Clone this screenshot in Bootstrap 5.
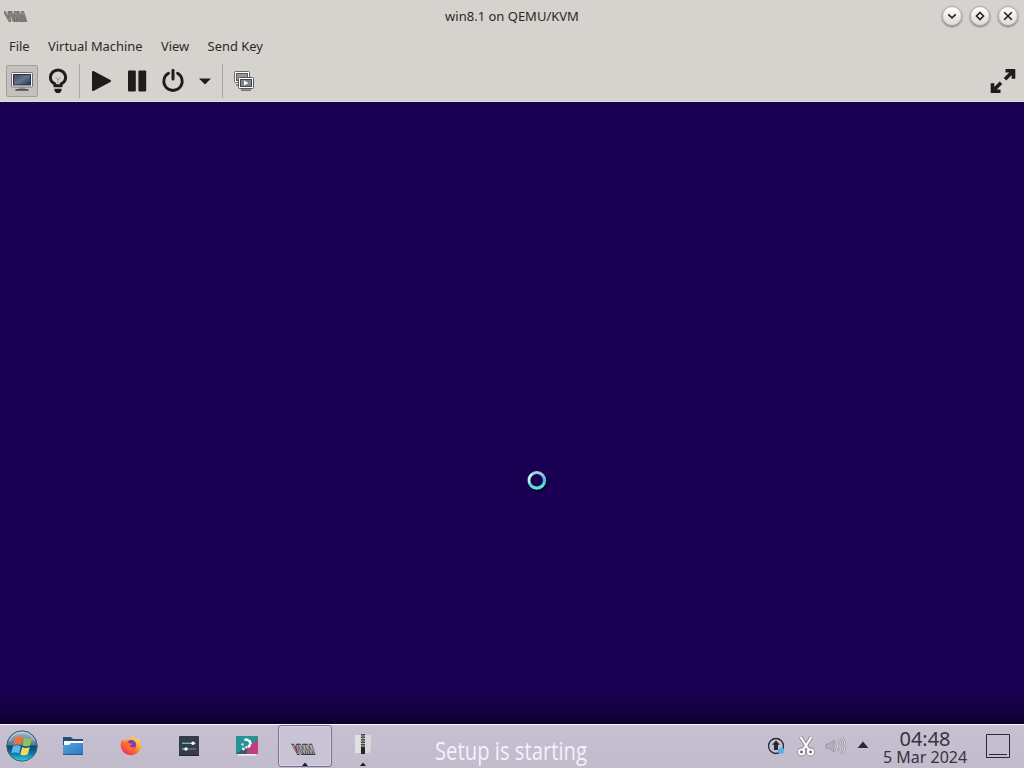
<!DOCTYPE html>
<html lang="en">
<head>
  <meta charset="UTF-8" />
  <meta name="viewport" content="width=device-width, initial-scale=1.0" />
  <title>win8.1 on QEMU/KVM</title>
  <link href="https://cdn.jsdelivr.net/npm/bootstrap@5.3.0/dist/css/bootstrap.min.css" rel="stylesheet">
  <style>
    body {
      font-family: "Noto Sans", "Open Sans", sans-serif;
      font-size: 13px;
      line-height: 18px;
      color: #2b2a29;
      background: #1a0052;
    }

    svg {
      display: block;
      flex: none;
    }

    /* Window chrome */
    .window-head {
      height: 102px;
      background: #d6d2ce;
      border-bottom: 1px solid #dedbe0;
    }

    .titlebar {
      height: 32px;
      padding: 0 6px 0 4px;
    }

    .title-side {
      width: 76px;
    }

    .win-title {
      padding-left: 2px;
    }

    .win-btn {
      width: 20px;
      height: 20px;
      padding: 0;
      border: 1px solid #aaa7a4;
      border-radius: 50%;
      background: linear-gradient(#fff, #dedbd8);
      box-shadow: 0 1px 2px rgba(0, 0, 0, .5);
    }

    .menubar {
      height: 29px;
      padding: 0 0 2px 9px;
      gap: 18.4px;
    }

    .menubar .nav-link {
      padding: 0;
      color: #2b2a29;
      font-size: 12.9px;
    }

    .toolbar {
      height: 40px;
      padding: 0 6px;
    }

    .tool {
      width: 32px;
      height: 32px;
      padding: 0;
      border: 1px solid transparent;
      border-radius: 2px;
    }

    .tool.pressed {
      background: #c3c0bd;
      border-color: #a19e9b;
    }

    .tool-sep {
      width: 1px;
      height: 34px;
      margin: 0 1px;
      background: #aaa7a4;
    }

    .tool-sep.wide {
      margin-left: 5px;
    }

    /* Guest display */
    .guest {
      background: linear-gradient(#190052 0, #190052 590px, #140042 608px, #0d0029 622px);
    }

    .spinner-spot {
      margin: 367px 0 0 525px;
    }

    /* Panel */
    .panel {
      height: 44px;
      padding-bottom: 1px;
      background: linear-gradient(#c6c0d2, #c1bbcc);
      border-top: 1px solid #fbf9ff;
    }

    .start {
      width: 44px;
    }

    .task {
      width: 54px;
      height: 42px;
      margin: 0 2px;
      padding: 0;
      border: 1px solid transparent;
      border-radius: 3px;
    }

    .task.current {
      background: #c9c4d5;
      border-color: #74708f;
      box-shadow: inset 0 0 0 1px #d8d4e3;
    }

    .guest-status {
      margin: 9px 0 0 39px;
    }

    .clock {
      width: 88px;
      margin-left: 12px;
      color: #35333f;
    }

    .clock-time {
      padding-top: 3px;
      font-size: 20px;
      line-height: 18px;
    }

    .clock-date {
      font-size: 16px;
      line-height: 18px;
    }

    .show-desktop {
      margin: 0 13px 0 16px;
    }
  </style>
</head>
<body class="vh-100 overflow-hidden d-flex flex-column">

  <header class="window-head flex-shrink-0">
    <!-- Title bar -->
    <div class="titlebar d-flex align-items-center justify-content-between">
      <div class="title-side">
        <svg width="34" height="20" viewBox="0 0 34 20">
          <text transform="translate(-2 0) skewX(18)" x="0" y="15" textLength="20" lengthAdjust="spacingAndGlyphs" font-family="Liberation Sans, sans-serif" font-weight="700" font-size="13" fill="#948d8a" stroke="#5c5655" stroke-width="1.6" paint-order="stroke">VMM</text>
        </svg>
      </div>
      <div class="win-title">win8.1 on QEMU/KVM</div>
      <div class="title-side d-flex gap-2 justify-content-end">
        <button class="win-btn d-flex align-items-center justify-content-center" aria-label="Minimize">
          <svg width="12" height="12" viewBox="0 0 12 12"><path d="M2.3 4.3 6 7.8l3.7-3.5" fill="none" stroke="#222" stroke-width="1.6"/></svg>
        </button>
        <button class="win-btn d-flex align-items-center justify-content-center" aria-label="Maximize">
          <svg width="12" height="12" viewBox="0 0 12 12"><path d="M6 2.5 9.5 6 6 9.5 2.5 6z" fill="none" stroke="#222" stroke-width="1.6"/></svg>
        </button>
        <button class="win-btn d-flex align-items-center justify-content-center" aria-label="Close">
          <svg width="12" height="12" viewBox="0 0 12 12"><path d="m2.2 2.2 7.6 7.6m0-7.6L2.2 9.8" stroke="#222" stroke-width="1.6"/></svg>
        </button>
      </div>
    </div>

    <!-- Menu bar -->
    <nav class="menubar nav align-items-center flex-nowrap">
      <a class="nav-link" href="#">File</a>
      <a class="nav-link" href="#">Virtual Machine</a>
      <a class="nav-link" href="#">View</a>
      <a class="nav-link" href="#">Send Key</a>
    </nav>

    <!-- Toolbar -->
    <div class="toolbar d-flex align-items-center">
      <button class="tool pressed btn d-flex align-items-center justify-content-center" aria-label="Console">
        <svg width="24" height="24" viewBox="0 0 24 24">
          <defs><linearGradient id="lcd" x1="0" y1="0" x2="1" y2="1"><stop offset="0" stop-color="#3d4a69"/><stop offset=".5" stop-color="#66738f"/><stop offset="1" stop-color="#26324e"/></linearGradient></defs>
          <rect x="1.5" y="3.5" width="21" height="14.5" rx="1" fill="#f6f6f4" stroke="#73726f"/>
          <rect x="3.5" y="5.5" width="17" height="10.5" fill="url(#lcd)" stroke="#2b3142"/>
          <path d="M9 18h6v2H9z" fill="#8c8b87"/><path d="M5.5 20h13v1.8h-13z" fill="#555350"/>
        </svg>
      </button>
      <button class="tool btn d-flex align-items-center justify-content-center ms-1" aria-label="Details">
        <svg width="24" height="26" viewBox="0 0 24 26">
          <path d="M8.8 17.7v-1.9C6 14.5 4.4 12.4 4.4 9.5a7.6 7.6 0 0 1 15.2 0c0 2.9-1.6 5-4.4 6.3v1.9z" fill="none" stroke="#1f1d1c" stroke-width="3" stroke-linejoin="round"/>
          <path d="m9.7 9 2.3 3 2.3-3M12 12v3" fill="none" stroke="#99938f"/>
          <path d="M8.5 20.8h7v2L13.8 25h-3.6l-1.7-2.2z" fill="#1f1d1c"/>
        </svg>
      </button>
      <div class="tool-sep wide"></div>
      <button class="tool btn d-flex align-items-center justify-content-center ms-1" aria-label="Run">
        <svg width="24" height="24" viewBox="0 0 24 24"><path d="M4 3 21 12 4 21z" fill="#1f1d1c" stroke="#1f1d1c" stroke-width="2" stroke-linejoin="round"/></svg>
      </button>
      <button class="tool btn d-flex align-items-center justify-content-center ms-1" aria-label="Pause">
        <svg width="24" height="24" viewBox="0 0 24 24"><rect x="3" y="1.5" width="7.8" height="21" rx="1" fill="#1f1d1c"/><rect x="13.4" y="1.5" width="7.8" height="21" rx="1" fill="#1f1d1c"/></svg>
      </button>
      <button class="tool btn d-flex align-items-center justify-content-center ms-1" aria-label="Shut down">
        <svg width="24" height="24" viewBox="0 0 24 24"><path d="M7.5 4.3a9.2 9.2 0 1 0 9 0" fill="none" stroke="#1f1d1c" stroke-width="2.8" stroke-linecap="round"/><path d="M12 1.4V10" stroke="#1f1d1c" stroke-width="3" stroke-linecap="round"/></svg>
      </button>
      <button class="tool btn d-flex align-items-center justify-content-center" aria-label="Shut down options">
        <svg width="12" height="7" viewBox="0 0 12 7"><path d="M0 .5h12l-6 6z" fill="#1f1d1c"/></svg>
      </button>
      <div class="tool-sep"></div>
      <button class="tool btn d-flex align-items-center justify-content-center ms-1" aria-label="Snapshots">
        <svg width="24" height="24" viewBox="0 0 24 24">
          <rect x="2.5" y="2.5" width="15" height="11" rx="1" fill="#fff" stroke="#6a6865"/><rect x="4.5" y="4.5" width="11" height="7" fill="#92989c" stroke="#54585d"/>
          <path d="M4 16h4" stroke="#77736f" stroke-width="1.4"/>
          <rect x="6.5" y="8.5" width="15" height="11" rx="1" fill="#fff" stroke="#5b5956"/><rect x="8.5" y="10.5" width="11" height="7" fill="#7c858c" stroke="#45494e"/>
          <path d="m12 11.5 4.5 2.5-4.5 2.5z" fill="#fff"/><path d="M9 21.2h10" stroke="#73706d" stroke-width="1.6"/>
        </svg>
      </button>
      <button class="btn p-0 border-0 ms-auto" aria-label="Fullscreen">
        <svg width="30" height="28" viewBox="0 0 30 28">
          <g fill="none" stroke="#1f1d1c" stroke-width="3.6">
            <path d="M17.5 3.8h8v8M25 4.300l-8 8"/>
            <path d="M12.500 24.200h-8v-8M5 23.700l8-8"/>
          </g>
        </svg>
      </button>
    </div>
  </header>

  <!-- Guest display with busy ring -->
  <main class="guest flex-grow-1 overflow-hidden">
    <div class="spinner-spot">
      <svg width="24" height="24" viewBox="0 0 24 24">
        <defs><linearGradient id="ring" x1="0" y1="0" x2=".2" y2="1"><stop offset="0" stop-color="#a8d6e0"/><stop offset=".4" stop-color="#8db5dc"/><stop offset=".65" stop-color="#43bfc6"/><stop offset="1" stop-color="#5fe6cf"/></linearGradient></defs>
        <circle cx="13" cy="12.5" r="8.5" fill="none" stroke="#0c0038" stroke-width="3"/>
        <circle cx="11.8" cy="11.3" r="7.8" fill="none" stroke="url(#ring)" stroke-width="3.2"/>
        <path d="M4.7 14.5A8 8 0 0 1 7 5" fill="none" stroke="#d9fff8" stroke-width="1.5"/>
      </svg>
    </div>
  </main>

  <!-- Panel -->
  <footer class="panel flex-shrink-0 d-flex align-items-center">
    <div class="start d-flex justify-content-center">
      <svg width="34" height="34" viewBox="0 0 34 34">
        <defs>
          <linearGradient id="orb" x1="0" y1="0" x2="0" y2="1"><stop offset="0" stop-color="#a9bccb"/><stop offset=".46" stop-color="#547b96"/><stop offset=".5" stop-color="#064b73"/><stop offset=".75" stop-color="#0879a4"/><stop offset="1" stop-color="#39d5e8"/></linearGradient>
        </defs>
        <circle cx="17" cy="17" r="15.2" fill="url(#orb)" stroke="#3c5a70" stroke-width="1"/>
        <path d="M4.5 12A13.5 13.5 0 0 1 29.5 12" fill="none" stroke="#dce7ee" stroke-opacity=".7"/>
        <path d="M10.2 8.5Q14 6.2 18 8.3L16.2 15.8Q12 13.8 8.4 16z" fill="#ec7140"/>
        <path d="M19.3 8.8Q23 11 27 8.8L25.1 16.5Q21.4 18.6 17.5 16.5z" fill="#8fc356"/>
        <path d="M8 17.3Q12 15.2 15.9 17.2L14 24.5Q10 22.4 6.2 24.6z" fill="#62b5e3"/>
        <path d="M17.2 18Q21 20 24.8 17.9L22.9 25.3Q19.2 27.4 15.3 25.4z" fill="#f5d95a"/>
      </svg>
    </div>
    <button class="task btn d-flex align-items-center justify-content-center" aria-label="Files">
      <svg width="24" height="24" viewBox="0 0 24 24">
        <defs><linearGradient id="folder" x1="0" y1="0" x2="1" y2="1"><stop offset="0" stop-color="#50a5df"/><stop offset="1" stop-color="#2f76bb"/></linearGradient></defs>
        <path d="M2 3h8l2 2h10v8H2z" fill="#284e78"/><path d="M3 7h19v7H3z" fill="#f5fbff"/>
        <path d="M2 11h6l2-2h12v12H2z" fill="url(#folder)"/><path d="M2 20.5h20" stroke="#285a8d"/>
      </svg>
    </button>
    <button class="task btn d-flex align-items-center justify-content-center" aria-label="Firefox">
      <svg width="24" height="24" viewBox="0 0 24 24">
        <defs><linearGradient id="fox" x1=".9" y1="0" x2=".2" y2="1"><stop offset="0" stop-color="#fff34f"/><stop offset=".35" stop-color="#ffb52e"/><stop offset=".65" stop-color="#ff6533"/><stop offset="1" stop-color="#ec2562"/></linearGradient></defs>
        <path d="M3.5 5.2 5.5 7Q7 5.2 9 5l2-1q1 .5 1.5 1l2-3.5q1 3 3.2 4.2l1-1.2q3.3 3.5 3.3 8A10.2 10.2 0 1 1 3.5 5.2z" fill="url(#fox)"/>
        <circle cx="12.3" cy="11" r="4.9" fill="#7c3bbc"/>
        <path d="M4.5 9q3-2.2 6 .3l3 .4q-1 1.6-3 2 1.3 2.7 5.7.7-1 3.8-4.7 3.8Q6 15.5 4.500 9" fill="#ff6b35"/>
      </svg>
    </button>
    <button class="task btn d-flex align-items-center justify-content-center" aria-label="Settings">
      <svg width="22" height="22" viewBox="0 0 22 22">
        <rect x="1" y="1" width="20" height="20" rx="1" fill="#353b48"/><path d="M1 20.5h20" stroke="#20242d"/>
        <path d="M4 8.3h14M4 14h14" stroke="#7f8c96"/><path d="M4 8.3h10M4 14h3" stroke="#63c7df"/><circle cx="15" cy="8.3" r="1.7" fill="#fff"/><circle cx="8" cy="14" r="1.7" fill="#fff"/>
      </svg>
    </button>
    <button class="task btn d-flex align-items-center justify-content-center" aria-label="Help">
      <svg width="24" height="24" viewBox="0 0 24 24">
        <path d="M1 2h22v18H1z" fill="#269496"/><path d="M23 5v15H7l5-6z" fill="#bd3f7e"/><path d="M1 20 12 12v8z" fill="#39566e"/>
        <path d="M3 20h18v1.5H3z" fill="#f3eff6"/>
        <path d="m9.5 5.5 4.5.5 1.5 3.5-1.5 3-3.5 1" fill="none" stroke="#fff" stroke-width="2.5" stroke-dasharray="4 .6"/><circle cx="8.5" cy="15" r="1.4" fill="#fff"/><circle cx="7.5" cy="10.5" r="1.3" fill="#bdebe5"/>
      </svg>
    </button>
    <button class="task current btn d-flex flex-column align-items-center justify-content-end" aria-label="Virtual Machine Manager">
      <svg width="34" height="20" viewBox="0 0 34 20" class="mb-1">
        <text transform="translate(2 0) skewX(18)" x="0" y="16" textLength="20" lengthAdjust="spacingAndGlyphs" font-family="Liberation Sans, sans-serif" font-weight="700" font-size="13.5" fill="#b9b5b6" stroke="#333030" stroke-width="1.8" paint-order="stroke">VMM</text>
        <path d="m7 8 2.500 7" stroke="#873c4c" stroke-width="1.300"/>
      </svg>
      <svg width="6" height="4" viewBox="0 0 6 4"><path d="M0 4 3 .5 6 4z" fill="#1c1a26"/></svg>
    </button>
    <button class="task btn d-flex flex-column align-items-center justify-content-end" aria-label="Archive">
      <svg width="18" height="20" viewBox="0 0 18 20" class="mb-2">
        <path d="M1 1h16v15l-2 3H1z" fill="#d9d7d9"/><path d="M1 1h5v18H1z" fill="#e2e0e2"/>
        <path d="M9 0v14" stroke="#353535" stroke-width="4" stroke-dasharray="1.5 1"/><path d="M9 0v14" stroke="#6d6c6b"/><path d="M7 13h4v7H7z" fill="#252525"/>
      </svg>
      <svg width="6" height="4" viewBox="0 0 6 4"><path d="M0 4 3 .5 6 4z" fill="#1c1a26"/></svg>
    </button>

    <svg class="guest-status" width="160" height="38" viewBox="0 0 160 38">
      <text x="4" y="28" textLength="152" lengthAdjust="spacingAndGlyphs" font-family="Open Sans, Noto Sans, sans-serif" font-size="26" fill="#f4f1fc">Setup is starting</text>
    </svg>

    <!-- Tray -->
    <div class="d-flex align-items-center ms-auto">
      <svg width="20" height="20" viewBox="0 0 20 20">
        <circle cx="10" cy="10" r="7.5" fill="none" stroke="#292833" stroke-width="1.3"/>
        <path d="m10 4.5 4 4.3h-2V14H8V8.8H6z" fill="#292833"/><circle cx="15" cy="15" r="3" fill="#51b5e3"/>
      </svg>
      <svg width="20" height="22" viewBox="0 0 20 22" style="margin-left: 10px">
        <g fill="none" stroke="#85818f" stroke-width="3.8"><path d="m4.5 2 8.5 13M15.5 2 7 15"/><circle cx="5.5" cy="17" r="2.5"/><circle cx="14.5" cy="17" r="2.5"/></g>
        <g fill="none" stroke="#fff" stroke-width="2.2"><path d="m4.5 2 8.5 13M15.5 2 7 15"/><circle cx="5.5" cy="17" r="2.5"/><circle cx="14.5" cy="17" r="2.5"/></g>
        <circle cx="5.5" cy="17" r="1.2" fill="#6d6976"/><circle cx="14.5" cy="17" r="1.2" fill="#6d6976"/>
      </svg>
      <svg width="22" height="20" viewBox="0 0 22 20" style="margin-left: 9px">
        <path d="M1 8h3l5-4v12l-5-4H1z" fill="#b3afbb" stroke="#9a96a4"/>
        <g fill="none" stroke="#9a96a4" stroke-width="2.4"><path d="M11 5.5q3 4.5 0 9M14 3q4.5 7 0 14M17 1q6 9 0 18"/></g>
        <g fill="none" stroke="#d3cfda" stroke-width="1.2"><path d="M11 5.5q3 4.5 0 9M14 3q4.5 7 0 14M17 1q6 9 0 18"/></g>
      </svg>
      <svg width="12" height="10" viewBox="0 0 12 10" style="margin-left: 10px"><path d="m.5 7 5.5-6.5 5.5 6.500z" fill="#292833"/></svg>
      <div class="clock text-center text-nowrap">
        <div class="clock-time">04:48</div>
        <div class="clock-date">5 Mar 2024</div>
      </div>
      <svg class="show-desktop" width="26" height="26" viewBox="0 0 26 26"><path d="M1.5 1.5h23v23h-23zM4 21.5h18" fill="none" stroke="#292842" stroke-width="1"/></svg>
    </div>
  </footer>

  <script src="https://cdn.jsdelivr.net/npm/bootstrap@5.3.0/dist/js/bootstrap.bundle.min.js"></script>
</body>
</html>
